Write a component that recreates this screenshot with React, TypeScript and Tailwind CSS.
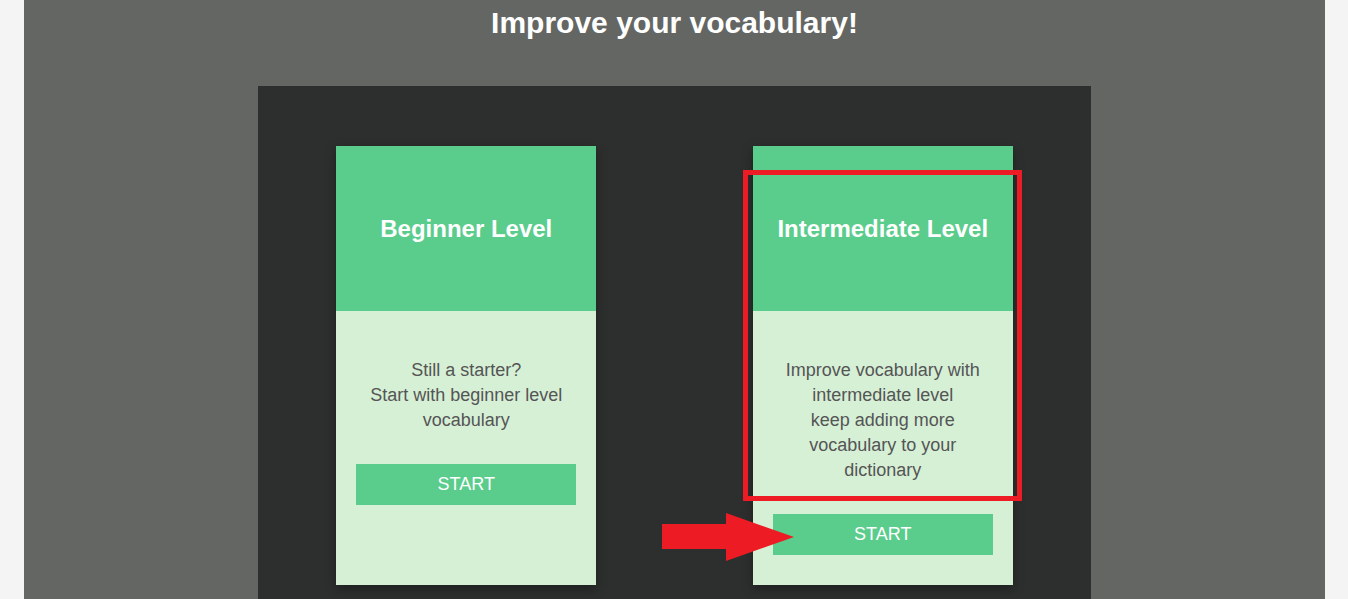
import React from 'react';

type Level = {
  title: string;
  lines: string[];
};

const levels: Level[] = [
  {
    title: 'Beginner Level',
    lines: ['Still a starter?', 'Start with beginner level', 'vocabulary'],
  },
  {
    title: 'Intermediate Level',
    lines: [
      'Improve vocabulary with',
      'intermediate level',
      'keep adding more',
      'vocabulary to your',
      'dictionary',
    ],
  },
];

function LevelCard({ level }: { level: Level }) {
  return (
    <div className="w-[260px] flex flex-col bg-[#d6f0d6] shadow-[0_4px_10px_rgba(0,0,0,0.35)]">
      {/* Header */}
      <div className="h-[165px] shrink-0 bg-[#5acc8c] flex items-center justify-center">
        <h2 className="text-[24px] leading-[30px] font-bold text-white">{level.title}</h2>
      </div>

      {/* Body */}
      <div className="flex flex-col items-center px-4 pt-[47px] pb-[29px]">
        <p className="text-[18px] leading-[25px] text-[#555555] text-center">
          {level.lines.map((line) => (
            <span key={line} className="block">
              {line}
            </span>
          ))}
        </p>
        <button className="mt-[31px] w-[220px] h-[41px] bg-[#5acc8c] text-white text-[18px]">
          START
        </button>
      </div>
    </div>
  );
}

export default function App() {
  return (
    <div
      className="h-[599px] overflow-hidden bg-[#f4f4f4] px-[24px] relative"
      style={{ fontFamily: '"Liberation Sans", Arial, sans-serif' }}
    >
      <div className="h-full w-[1301px] bg-[#646663] flex flex-col items-center">
        <h1 className="shrink-0 pt-[4px] h-[86px] text-[30px] leading-[38px] font-bold text-white">
          Improve your vocabulary!
        </h1>

        {/* Level cards */}
        <div className="flex-1 w-[833px] bg-[#2d2f2e] flex justify-around items-stretch pt-[60px] pb-[14px]">
          {levels.map((level) => (
            <LevelCard key={level.title} level={level} />
          ))}
        </div>
      </div>

      {/* Annotation overlay */}
      <div className="absolute left-[743px] top-[170px] w-[279px] h-[331px] border-[5px] border-[#ed1c24] pointer-events-none" />
      <svg
        className="absolute left-[660px] top-[512px] pointer-events-none"
        width="140"
        height="52"
        viewBox="0 0 140 52"
      >
        <polygon
          points="2,12 66,12 66,1 134,25 66,49 66,37 2,37"
          fill="#ed1c24"
        />
      </svg>
    </div>
  );
}
